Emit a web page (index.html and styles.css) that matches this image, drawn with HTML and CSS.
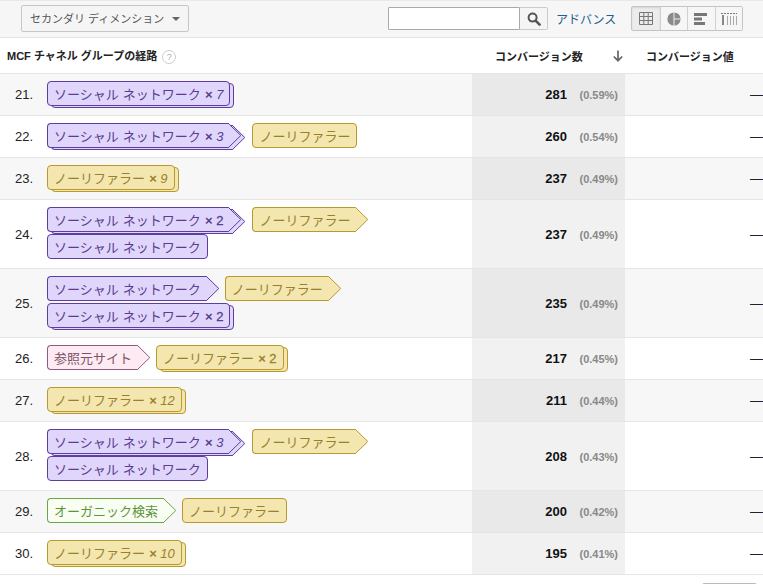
FILE: index.html
```html
<!DOCTYPE html>
<html lang="ja">
<head>
<meta charset="utf-8">
<title>MCF チャネル グループの経路</title>
<link rel="stylesheet" href="styles.css">
</head>
<body>
<svg class="defs" width="0" height="0" aria-hidden="true">
  <symbol id="head" viewBox="0 0 13 25" overflow="visible"><path d="M0 .5h.5L12.800 12.500.5 24.500H0"/></symbol>
</svg>
<div class="toolbar">
  <button class="dropdown">セカンダリ ディメンション<i class="caret"></i></button>
  <div class="search">
    <span class="search-input"></span>
    <span class="search-btn"><svg width="14" height="14" viewBox="0 0 14 14"><circle cx="5.6" cy="5.6" r="4" fill="none" stroke="#555" stroke-width="2"/><path d="M8.6 8.6l4 4" stroke="#555" stroke-width="2.6" stroke-linecap="round"/></svg></span>
  </div>
  <a class="advanced">アドバンス</a>
  <div class="views">
    <span class="view on"><svg width="14" height="13" viewBox="0 0 14 13"><path d="M.5.5h13v12H.5zM.5 4.5h13M.5 8.5h13M4.8.5v12M9.2.5v12" fill="none" stroke="#777"/></svg></span>
    <span class="view"><svg width="14" height="14" viewBox="0 0 14 14"><circle cx="7" cy="7" r="6.6" fill="#8a8a8a"/><path d="M7 .4V7h6.6M7 7v6.6" fill="none" stroke="#eee"/></svg></span>
    <span class="view"><svg width="14" height="12" viewBox="0 0 14 12"><path d="M0 0h13v3H0zM0 4.5h8v3H0zM0 9h11v3H0z" fill="#777"/></svg></span>
    <span class="view"><svg width="16" height="12" viewBox="0 0 16 12"><path d="M0 .5h16" stroke="#777" stroke-dasharray="2 1"/><path d="M1 2h2v10H1z" fill="#888"/><path d="M6.500 3v9M9.500 3v9M12.500 3v9M15.500 3v9" stroke="#aaa"/></svg></span>
  </div>
</div>
<table class="report">
  <colgroup><col class="c-path"><col class="c-conv"><col class="c-val"></colgroup>
  <thead>
    <tr>
      <th class="h-path">MCF チャネル グループの経路<span class="help">?</span></th>
      <th class="h-conv"><span class="h-inner">コンバージョン数<svg width="12" height="12" viewBox="0 0 12 12"><path d="M6 .5v10M1.800 6.500L6 10.700l4.200-4.200" fill="none" stroke="#666" stroke-width="1.700"/></svg></span></th>
      <th class="h-val">コンバージョン値</th>
    </tr>
  </thead>
  <tbody>
    <tr><td><div class="path"><span class="num">21.</span><div class="tags">
      <span class="tag social stacked"><span class="back"><span class="body"></span></span><span class="face"><span class="body">ソーシャル ネットワーク <em>× <i>7</i></em></span></span></span>
    </div></div></td><td class="conv"><b>281</b><span class="pct">(0.59%)</span></td><td class="val">—</td></tr>

    <tr><td><div class="path"><span class="num">22.</span><div class="tags">
      <span class="tag social stacked pointed"><span class="back"><span class="body"></span><svg class="head"><use href="#head"/></svg></span><span class="face"><span class="body">ソーシャル ネットワーク <em>× <i>3</i></em></span><svg class="head"><use href="#head"/></svg></span></span>
      <span class="tag yellow"><span class="face"><span class="body">ノーリファラー</span></span></span>
    </div></div></td><td class="conv"><b>260</b><span class="pct">(0.54%)</span></td><td class="val">—</td></tr>

    <tr><td><div class="path"><span class="num">23.</span><div class="tags">
      <span class="tag yellow stacked"><span class="back"><span class="body"></span></span><span class="face"><span class="body">ノーリファラー <em>× <i>9</i></em></span></span></span>
    </div></div></td><td class="conv"><b>237</b><span class="pct">(0.49%)</span></td><td class="val">—</td></tr>

    <tr><td><div class="path"><span class="num">24.</span><div class="tags">
      <span class="tag social stacked pointed"><span class="back"><span class="body"></span><svg class="head"><use href="#head"/></svg></span><span class="face"><span class="body">ソーシャル ネットワーク <em>× <u>2</u></em></span><svg class="head"><use href="#head"/></svg></span></span>
      <span class="tag yellow"><span class="face"><span class="body">ノーリファラー</span><svg class="head"><use href="#head"/></svg></span></span>
      <span class="tag social"><span class="face"><span class="body">ソーシャル ネットワーク</span></span></span>
    </div></div></td><td class="conv"><b>237</b><span class="pct">(0.49%)</span></td><td class="val">—</td></tr>

    <tr><td><div class="path"><span class="num">25.</span><div class="tags">
      <span class="tag social"><span class="face"><span class="body">ソーシャル ネットワーク</span><svg class="head"><use href="#head"/></svg></span></span>
      <span class="tag yellow"><span class="face"><span class="body">ノーリファラー</span><svg class="head"><use href="#head"/></svg></span></span>
      <span class="tag social stacked"><span class="back"><span class="body"></span></span><span class="face"><span class="body">ソーシャル ネットワーク <em>× <u>2</u></em></span></span></span>
    </div></div></td><td class="conv"><b>235</b><span class="pct">(0.49%)</span></td><td class="val">—</td></tr>

    <tr><td><div class="path"><span class="num">26.</span><div class="tags">
      <span class="tag pink"><span class="face"><span class="body">参照元サイト</span><svg class="head"><use href="#head"/></svg></span></span>
      <span class="tag yellow stacked"><span class="back"><span class="body"></span></span><span class="face"><span class="body">ノーリファラー <em>× <u>2</u></em></span></span></span>
    </div></div></td><td class="conv"><b>217</b><span class="pct">(0.45%)</span></td><td class="val">—</td></tr>

    <tr><td><div class="path"><span class="num">27.</span><div class="tags">
      <span class="tag yellow stacked"><span class="back"><span class="body"></span></span><span class="face"><span class="body">ノーリファラー <em>× <i>12</i></em></span></span></span>
    </div></div></td><td class="conv"><b>211</b><span class="pct">(0.44%)</span></td><td class="val">—</td></tr>

    <tr><td><div class="path"><span class="num">28.</span><div class="tags">
      <span class="tag social stacked pointed"><span class="back"><span class="body"></span><svg class="head"><use href="#head"/></svg></span><span class="face"><span class="body">ソーシャル ネットワーク <em>× <i>3</i></em></span><svg class="head"><use href="#head"/></svg></span></span>
      <span class="tag yellow"><span class="face"><span class="body">ノーリファラー</span><svg class="head"><use href="#head"/></svg></span></span>
      <span class="tag social"><span class="face"><span class="body">ソーシャル ネットワーク</span></span></span>
    </div></div></td><td class="conv"><b>208</b><span class="pct">(0.43%)</span></td><td class="val">—</td></tr>

    <tr><td><div class="path"><span class="num">29.</span><div class="tags">
      <span class="tag green"><span class="face"><span class="body">オーガニック検索</span><svg class="head"><use href="#head"/></svg></span></span>
      <span class="tag yellow"><span class="face"><span class="body">ノーリファラー</span></span></span>
    </div></div></td><td class="conv"><b>200</b><span class="pct">(0.42%)</span></td><td class="val">—</td></tr>

    <tr><td><div class="path"><span class="num">30.</span><div class="tags">
      <span class="tag yellow stacked"><span class="back"><span class="body"></span></span><span class="face"><span class="body">ノーリファラー <em>× <i>10</i></em></span></span></span>
    </div></div></td><td class="conv"><b>195</b><span class="pct">(0.41%)</span></td><td class="val">—</td></tr>
  </tbody>
</table>
<div class="pager"><span class="pager-btn"></span></div>
</body>
</html>
```

FILE: styles.css
```css
* { box-sizing: border-box; }
html, body { margin: 0; height: 100%; overflow: hidden; }
body {
  background: #fff;
  color: #222;
  font-family: "Liberation Sans", "Noto Sans CJK JP", sans-serif;
  font-size: 13px;
}
.defs { position: absolute; }

/* toolbar */
.toolbar {
  display: flex;
  align-items: center;
  height: 38px;
  padding: 0 20px 1px 21px;
  background: #f6f6f6;
  border-top: 1px solid #e9e9e9;
  border-bottom: 1px solid #e3e3e3;
}
.dropdown {
  display: flex;
  align-items: center;
  justify-content: space-between;
  width: 168px;
  height: 27px;
  padding: 0 8px 2px 8px;
  background: #f5f5f5;
  border: 1px solid #c6c6c6;
  border-radius: 2px;
  color: #555;
  font: 11px "Liberation Sans", "Noto Sans CJK JP", sans-serif;
}
.caret {
  width: 0;
  height: 0;
  margin-top: 2px;
  border: 4px solid transparent;
  border-top: 4px solid #666;
  border-bottom: 0;
}
.search { display: flex; margin-left: auto; height: 23px; }
.search-input {
  width: 132px;
  background: #fff;
  border: 1px solid #aaa;
  border-radius: 1px 0 0 1px;
}
.search-btn {
  display: flex;
  align-items: center;
  justify-content: center;
  width: 28px;
  background: #f5f5f5;
  border: 1px solid #ccc;
  border-left: 0;
  border-radius: 0 2px 2px 0;
}
.advanced {
  margin: 0 14px 0 8px;
  color: #20608f;
  font-size: 12px;
  width: 61px;
  white-space: nowrap;
}
.views {
  display: flex;
  height: 25px;
  border: 1px solid #c4c4c4;
  border-radius: 2px;
}
.view {
  display: flex;
  align-items: center;
  justify-content: center;
  width: 27.5px;
  background: #f6f6f6;
  border-left: 1px solid #d0d0d0;
}
.view.on { border-left: 0; background: #ececec; box-shadow: inset 0 1px 2px #d4d4d4; }

/* table */
.report {
  width: 763px;
  table-layout: fixed;
  border-collapse: separate;
  border-spacing: 0;
}
.c-path { width: 472px; }
.c-conv { width: 153px; }
.c-val { width: 138px; }
th {
  height: 36px;
  padding: 0;
  font-size: 11px;
  font-weight: 700;
  color: #222;
  background: #fff;
  border-bottom: 1px solid #e5e5e5;
  white-space: nowrap;
}
.h-path { padding-left: 7px; text-align: left; }
.help {
  display: inline-block;
  width: 14px;
  height: 14px;
  margin-left: 5px;
  border: 1px solid #ccc;
  border-radius: 50%;
  color: #aaa;
  font-size: 9px;
  font-weight: 400;
  line-height: 12px;
  text-align: center;
  vertical-align: 0;
}
.h-inner {
  display: flex;
  align-items: center;
  padding-left: 23px;
  gap: 29px;
}
.h-val { padding-left: 21px; text-align: left; }

td {
  padding: 0;
  border-bottom: 1px solid #e5e5e5;
  background: #fff;
}
tbody tr:nth-child(odd) td { background: #f7f7f7; }
td.conv { background: #f1f1f1; text-align: right; padding-right: 7px; }
tbody tr:nth-child(odd) td.conv { background: #e9e9e9; }
.conv b { font-size: 13px; color: #111; }
.pct {
  display: inline-block;
  width: 51px;
  color: #888;
  font-size: 11px;
  font-weight: 700;
}
.val { text-align: right; color: #222; font-size: 13px; }

.path { display: flex; align-items: center; padding: 7px 0 9px 15px; }
.num { width: 32px; flex: none; font-size: 13px; color: #222; position: relative; top: 1px; }
.tags { display: flex; flex-wrap: wrap; gap: 2px 6px; }

/* tags */
.tag { position: relative; display: flex; height: 25px; isolation: isolate; }
.stacked { margin-right: 4px; }
.stacked.pointed { margin-right: 5px; }
.face, .back { display: flex; height: 25px; }
.back { position: absolute; z-index: -1; inset: 2px -4px -2px 4px; }
.back .body { flex: 1; }
.body {
  display: block;
  height: 25px;
  padding: 0 6px;
  background: var(--fill);
  border: 1px solid var(--line);
  border-radius: 4px;
  color: var(--ink);
  font-size: 13px;
  line-height: 26px;
  word-spacing: .5px;
  white-space: nowrap;
}
.head {
  flex: none;
  width: 13px;
  height: 25px;
  margin-left: -1px;
  overflow: visible;
  fill: var(--fill);
  stroke: var(--line);
  stroke-width: 1;
}
.body:not(:last-child) {
  border-right: 0;
  border-radius: 4px 0 0 4px;
}
em { font-style: normal; font-size: 13px; font-weight: 700; word-spacing: 0; }
em i { font-style: italic; font-weight: 400; }
em u { text-decoration: none; font-weight: 400; -webkit-text-stroke: .3px currentColor; }

.social { --fill: #e0d6fb; --line: #5d3d9e; --ink: #5a3c90; }
.yellow { --fill: #f3e6af; --line: #b8992f; --ink: #9a7f2e; }
.pink { --fill: #fdeaf3; --line: #8c5c80; --ink: #7c5468; }
.green { --fill: #f8fff2; --line: #6ea544; --ink: #5f9240; }

.pager { display: flex; justify-content: flex-end; padding: 8px 6px 0 0; }
.pager-btn {
  width: 55px;
  height: 20px;
  background: #f5f5f5;
  border: 1px solid #bbb;
  border-radius: 2px;
}
```
